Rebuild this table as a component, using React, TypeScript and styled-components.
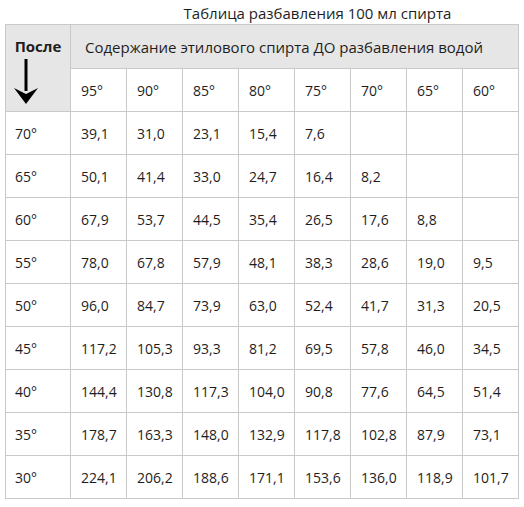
import React from "react";
import styled, { createGlobalStyle } from "styled-components";

const GlobalStyle = createGlobalStyle`
  html, body {
    margin: 0;
    padding: 0;
    background: #ffffff;
  }
  body {
    font-family: "Open Sans", "Liberation Sans", sans-serif;
    color: #1e1e1e;
  }
`;

const before = ["95°", "90°", "85°", "80°", "75°", "70°", "65°", "60°"];

const rows: { after: string; values: string[] }[] = [
  { after: "70°", values: ["39,1", "31,0", "23,1", "15,4", "7,6"] },
  { after: "65°", values: ["50,1", "41,4", "33,0", "24,7", "16,4", "8,2"] },
  { after: "60°", values: ["67,9", "53,7", "44,5", "35,4", "26,5", "17,6", "8,8"] },
  { after: "55°", values: ["78,0", "67,8", "57,9", "48,1", "38,3", "28,6", "19,0", "9,5"] },
  { after: "50°", values: ["96,0", "84,7", "73,9", "63,0", "52,4", "41,7", "31,3", "20,5"] },
  { after: "45°", values: ["117,2", "105,3", "93,3", "81,2", "69,5", "57,8", "46,0", "34,5"] },
  { after: "40°", values: ["144,4", "130,8", "117,3", "104,0", "90,8", "77,6", "64,5", "51,4"] },
  { after: "35°", values: ["178,7", "163,3", "148,0", "132,9", "117,8", "102,8", "87,9", "73,1"] },
  { after: "30°", values: ["224,1", "206,2", "188,6", "171,1", "153,6", "136,0", "118,9", "101,7"] },
];

const Arrow = () => (
  <svg width="26" height="46" viewBox="0 0 26 46">
    <rect x="11.5" y="0" width="3" height="32" fill="#000" />
    <path d="M1 29 L13 45 L25 29 L13 35 Z" fill="#000" />
  </svg>
);

export default function App() {
  return (
    <Page>
      <GlobalStyle />
      <Title>Таблица разбавления 100 мл спирта</Title>
      <Table>
        <colgroup>
          <col style={{ width: 65 }} />
          {before.map((b) => (
            <col key={b} style={{ width: 56 }} />
          ))}
        </colgroup>
        <thead>
          <tr>
            <CornerCell rowSpan={2}>
              <CornerLabel>После</CornerLabel>
              <Arrow />
            </CornerCell>
            <GroupCell colSpan={8}>
              Содержание этилового спирта ДО разбавления водой
            </GroupCell>
          </tr>
          <tr>
            {before.map((b) => (
              <Cell as="th" key={b}>
                {b}
              </Cell>
            ))}
          </tr>
        </thead>
        <tbody>
          {rows.map((r) => (
            <tr key={r.after}>
              <AfterCell>{r.after}</AfterCell>
              {before.map((_, i) => (
                <Cell key={i}>{r.values[i] ?? ""}</Cell>
              ))}
            </tr>
          ))}
        </tbody>
      </Table>
    </Page>
  );
}

const Page = styled.div`
  width: 524px;
  padding: 0 0 0 5px;
  box-sizing: border-box;
`;

const Title = styled.div`
  height: 24px;
  line-height: 26px;
  font-size: 15px;
  text-align: center;
  padding-left: 111px;
  width: 514px;
  box-sizing: border-box;
  color: #1e1e1e;
`;

const Table = styled.table`
  border-collapse: collapse;
  table-layout: fixed;
  width: 514px;
  font-size: 14px;

  td,
  th {
    border: 1px solid #c9c9c9;
    font-weight: 400;
    text-align: left;
    vertical-align: middle;
    padding: 0;
  }
`;

const CornerCell = styled.th`
  background: #e6e6e6;
  height: 86px;
  text-align: center !important;
  vertical-align: top !important;

  svg {
    display: block;
    margin: 3px auto 0 7px;
  }
`;

const CornerLabel = styled.div`
  font-weight: 700;
  font-size: 15px;
  padding-top: 11px;
  line-height: 20px;
  text-align: center;
`;

const GroupCell = styled.th`
  background: #e6e6e6;
  height: 43px;
  padding-left: 14px !important;
  font-size: 15px;
  white-space: nowrap;
`;

const Cell = styled.td`
  height: 42px;
  padding-left: 10px !important;
  background: #ffffff;
  white-space: nowrap;
`;

const AfterCell = styled(Cell)`
  padding-left: 9px !important;
`;
